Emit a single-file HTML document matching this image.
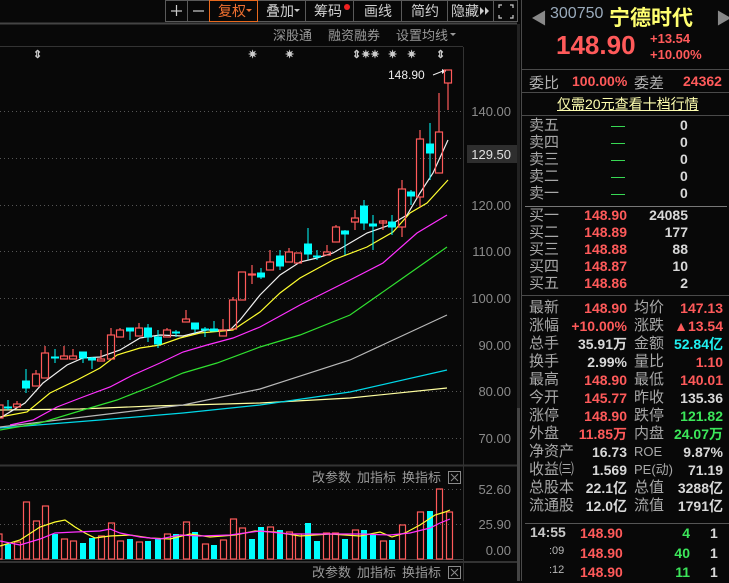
<!DOCTYPE html>
<html><head><meta charset="utf-8"><style>
*{margin:0;padding:0;box-sizing:border-box}
body{width:729px;height:581px;background:#080808;overflow:hidden;position:relative;font-family:"Liberation Sans","Noto Sans CJK SC",sans-serif}
.a{position:absolute;white-space:nowrap}
.g{color:#b8b8b8}
.r{color:#ff5a5a}
.gr{color:#3ce65a}
.w{color:#d8d8d8}
.num{font-weight:bold;font-size:14px}
.lb{font-size:15px;color:#b0b0b0}
.hl{position:absolute;left:521px;width:208px;height:1px;background:#4a4a4a}
</style></head><body>
<svg width="520" height="581" style="position:absolute;left:0;top:0" font-family="Liberation Sans,Noto Sans CJK SC,sans-serif">
<g stroke="#5a5a5a" fill="none">
<rect x="165.5" y="0.5" width="22" height="21"/><rect x="187.5" y="0.5" width="22" height="21"/>
<rect x="257.5" y="0.5" width="48" height="21"/><rect x="305.5" y="0.5" width="48" height="21"/>
<rect x="353.5" y="0.5" width="48" height="21"/><rect x="401.5" y="0.5" width="46" height="21"/>
<rect x="447.5" y="0.5" width="46" height="21"/><rect x="493.5" y="0.5" width="24" height="21"/>
</g>
<rect x="209.5" y="0.5" width="48" height="21" stroke="#e8691e" fill="none"/>
<line x1="0" y1="23.5" x2="517" y2="23.5" stroke="#444" stroke-width="2"/>
<g stroke="#ccc" stroke-width="1.2"><line x1="171" y1="11" x2="182" y2="11"/><line x1="176.5" y1="5" x2="176.5" y2="16"/><line x1="193" y1="11" x2="204" y2="11"/></g>
<g font-size="14" fill="#d0d0d0"><text x="218" y="16" fill="#f07030">复权</text><text x="266" y="16">叠加</text><text x="314" y="16">筹码</text><text x="364" y="16">画线</text><text x="411" y="16">简约</text><text x="451" y="16">隐藏</text></g>
<path d="M246 9l3 3 3-3z" fill="#f07030"/><path d="M294 9l3 3 3-3z" fill="#ccc"/><circle cx="347" cy="7" r="3" fill="#f02020"/>
<path d="M480 7l4 4-4 4zM485 7l4 4-4 4z" fill="#ccc"/>
<g stroke="#ccc" stroke-width="1.2" fill="none"><path d="M499 8v-3h3M510 5h3v3M499 15v3h3M513 15v3h-3"/></g>
<line x1="0" y1="46.5" x2="463" y2="46.5" stroke="#333"/>
<g font-size="13" fill="#9a9a9a"><text x="273" y="40">深股通</text><text x="328" y="40">融资融券</text><text x="396" y="40">设置均线</text></g>
<path d="M450 33l3 3 3-3z" fill="#9a9a9a"/>
<g font-size="11" fill="#ccc" font-weight="bold"><text x="33" y="58">⇕</text><text x="248" y="58">✷</text><text x="285" y="58">✷</text><text x="352" y="58">⇕✷✷</text><text x="388" y="58">✷</text><text x="407" y="58">✷</text><text x="436" y="58">⇕</text></g>
<g stroke="#555" stroke-dasharray="1,3"><line x1="0" y1="111.5" x2="463" y2="111.5"/><line x1="0" y1="158.5" x2="463" y2="158.5"/><line x1="0" y1="205.5" x2="463" y2="205.5"/><line x1="0" y1="251.5" x2="463" y2="251.5"/><line x1="0" y1="298.5" x2="463" y2="298.5"/><line x1="0" y1="345.5" x2="463" y2="345.5"/><line x1="0" y1="391.5" x2="463" y2="391.5"/><line x1="0" y1="438.5" x2="463" y2="438.5"/>
<line x1="0" y1="489.5" x2="463" y2="489.5"/><line x1="0" y1="524.5" x2="463" y2="524.5"/></g>
<line x1="463.5" y1="47" x2="463.5" y2="581" stroke="#333"/>
<g font-size="13" fill="#8a8a8a" text-anchor="end"><text x="511" y="116">140.00</text><text x="511" y="210">120.00</text><text x="511" y="256">110.00</text><text x="511" y="303">100.00</text><text x="511" y="350">90.00</text><text x="511" y="396">80.00</text><text x="511" y="443">70.00</text>
<text x="511" y="494">52.60</text><text x="511" y="529">25.90</text><text x="511" y="555">0.00</text></g>
<rect x="467" y="145" width="50" height="18" fill="#2e2e2e"/>
<text x="511" y="159" font-size="13" fill="#e0e0e0" text-anchor="end">129.50</text>
<text x="388" y="79" font-size="12" fill="#eee">148.90</text>
<path d="M433 75l10-4 3 0" stroke="#eee" fill="none"/><path d="M442 69l4 2-4 3z" fill="#eee"/>
<g fill="none" stroke-width="1.2">
<polyline stroke="#ffffa0" points="0,410 80,409 153,406 260,403 350,398 447,388"/>
<polyline stroke="#00d8e8" points="0,428 100,420 183,413 260,405 350,392 447,370"/>
<polyline stroke="#b8b8b8" points="0,427 100,415 183,405 260,389 350,360 447,315"/>
<polyline stroke="#30e030" points="0,430 40,423 83,410 117,400 150,387 183,373 217,363 260,347 300,335 350,315 400,280 447,247"/>
<polyline stroke="#ff30ff" points="10,425 33,420 57,407 83,397 110,387 133,375 160,363 183,352 207,345 233,338 260,327 300,305 350,280 383,263 417,233 447,215"/>
<polyline stroke="#ffff30" points="0,417 27,412 50,393 77,380 100,368 117,355 140,348 160,345 180,338 200,333 233,330 260,312 280,293 300,278 333,260 367,247 393,232 410,213 427,203 448,180"/>
<polyline stroke="#f0f0f0" points="0,418 25,403 43,383 67,365 83,358 100,357 120,350 140,338 160,335 183,336 207,330 230,330 240,320 260,295 280,275 300,262 317,258 333,253 350,243 367,233 390,225 407,215 420,193 433,173 448,140"/>
</g>
<g stroke="#ff5a5a" fill="none" stroke-width="1.2">
<path d="M17 401v3M36 370v4M45 346v7M64 346v10M73 349v7M101 350v9M111 328v7M120 328v2M139 323v5M167 328v2M186 310v9M223 319v11M233 297v3M252 265v19M270 250v12M289 248v4M327 245v7M336 225v2M355 210v8M355 222v8M383 220v10M402 180v9M402 227v10M420 130v9M420 197v10M439 93v39M448 83v27"/>
<rect x="-4" y="405" width="7" height="13"/><rect x="13.5" y="404" width="7" height="3"/><rect x="32.5" y="374" width="7" height="12"/><rect x="41.5" y="353" width="7" height="25"/><rect x="60.5" y="356" width="7" height="3"/><rect x="69.5" y="356" width="7" height="3"/><rect x="97.5" y="359" width="7" height="2"/><rect x="107.5" y="335" width="7" height="24"/><rect x="116.5" y="330" width="7" height="7"/><rect x="135.5" y="328" width="7" height="8"/><rect x="163.5" y="330" width="7" height="7"/><rect x="182.5" y="319" width="7" height="3"/><rect x="219.5" y="330" width="7" height="6"/><rect x="229.5" y="300" width="7" height="29"/><rect x="238.5" y="272" width="7" height="28"/><rect x="248.5" y="274" width="7" height="1"/><rect x="266.5" y="262" width="7" height="8"/><rect x="285.5" y="252" width="7" height="10"/><rect x="294.5" y="253" width="7" height="10"/><rect x="323.5" y="252" width="7" height="3"/><rect x="332.5" y="227" width="7" height="15"/><rect x="351.5" y="218" width="7" height="4"/><rect x="379.5" y="221" width="7" height="2"/><rect x="398.5" y="189" width="7" height="38"/><rect x="416.5" y="139" width="7" height="58"/><rect x="435.5" y="132" width="7" height="41"/><rect x="444.5" y="70" width="7" height="13"/>
</g>
<g fill="#00ffff" stroke="#00ffff" stroke-width="1">
<path d="M8 400v10M26 369v24M55 349v14M83 352v11M92 357v12M130 328v12M148 324v18M158 330v18M176 330v7M195 323v10M205 327v10M214 321v10M261 268v11M280 250v20M308 228v32M317 250v10M345 230v25M364 200v30M373 215v35M392 215v20M411 190v15M430 123v57"/>
<rect x="4.5" y="407" width="7" height="1"/><rect x="22.5" y="381" width="7" height="7"/><rect x="51.5" y="357" width="7" height="1"/><rect x="79.5" y="352" width="7" height="6"/><rect x="88.5" y="358" width="7" height="2"/><rect x="126.5" y="328" width="7" height="3"/><rect x="144.5" y="328" width="7" height="9"/><rect x="154.5" y="337" width="7" height="7"/><rect x="172.5" y="332" width="7" height="1"/><rect x="191.5" y="323" width="7" height="6"/><rect x="201.5" y="329" width="7" height="1"/><rect x="210.5" y="329" width="7" height="2"/><rect x="257.5" y="273" width="7" height="4"/><rect x="276.5" y="256" width="7" height="10"/><rect x="304.5" y="244" width="7" height="10"/><rect x="313.5" y="256" width="7" height="1"/><rect x="341.5" y="231" width="7" height="3"/><rect x="360.5" y="206" width="7" height="17"/><rect x="369.5" y="224" width="7" height="2"/><rect x="388.5" y="222" width="7" height="5"/><rect x="407.5" y="192" width="7" height="4"/><rect x="426.5" y="144" width="7" height="9"/>
</g>
<line x1="0" y1="465.5" x2="517" y2="465.5" stroke="#333" stroke-width="2"/>
<g font-size="13" fill="#9a9a9a"><text x="312" y="482">改参数</text><text x="357" y="482">加指标</text><text x="402" y="482">换指标</text><text x="312" y="577">改参数</text><text x="357" y="577">加指标</text><text x="402" y="577">换指标</text></g>
<g stroke="#8a8a8a" fill="none"><rect x="448.5" y="471.5" width="12" height="12"/><path d="M451 474l7 7M458 474l-7 7"/><rect x="448.5" y="566.5" width="12" height="12"/><path d="M451 569l7 7M458 569l-7 7"/></g>
<line x1="0" y1="559.5" x2="463" y2="559.5" stroke="#444"/>
<line x1="0" y1="562" x2="517" y2="562" stroke="#333" stroke-width="2"/>
<g fill="#00ffff">
<rect x="5" y="544" width="6" height="15"/><rect x="52" y="534" width="6" height="25"/><rect x="80" y="543" width="6" height="16"/><rect x="89" y="538" width="6" height="21"/><rect x="127" y="539" width="6" height="20"/><rect x="145" y="541" width="6" height="18"/><rect x="155" y="539" width="6" height="20"/><rect x="173" y="534" width="6" height="25"/><rect x="192" y="532" width="6" height="27"/><rect x="211" y="545" width="6" height="14"/><rect x="249" y="539" width="6" height="20"/><rect x="258" y="527" width="6" height="32"/><rect x="277" y="530" width="6" height="29"/><rect x="305" y="523" width="6" height="36"/><rect x="314" y="541" width="6" height="18"/><rect x="342" y="539" width="6" height="20"/><rect x="361" y="530" width="6" height="29"/><rect x="370" y="535" width="6" height="24"/><rect x="389" y="540" width="6" height="19"/><rect x="427" y="511" width="6" height="48"/>
</g>
<g stroke="#ff5a5a" fill="none" stroke-width="1.2">
<rect x="-3" y="534" width="5" height="25"/><rect x="14.5" y="542" width="6" height="17"/><rect x="23.5" y="502" width="6" height="57"/><rect x="33.5" y="521" width="6" height="38"/><rect x="42.5" y="506" width="6" height="53"/><rect x="61.5" y="539" width="6" height="20"/><rect x="70.5" y="541" width="6" height="18"/><rect x="98.5" y="536" width="6" height="23"/><rect x="108.5" y="523" width="6" height="36"/><rect x="117.5" y="541" width="6" height="18"/><rect x="136.5" y="542" width="6" height="17"/><rect x="164.5" y="534" width="6" height="25"/><rect x="183.5" y="522" width="6" height="37"/><rect x="202.5" y="544" width="6" height="15"/><rect x="220.5" y="540" width="6" height="19"/><rect x="230.5" y="519" width="6" height="40"/><rect x="239.5" y="528" width="6" height="31"/><rect x="267.5" y="527" width="6" height="32"/><rect x="286.5" y="532" width="6" height="27"/><rect x="295.5" y="534" width="6" height="25"/><rect x="323.5" y="533" width="6" height="26"/><rect x="332.5" y="533" width="6" height="26"/><rect x="352.5" y="530" width="6" height="29"/><rect x="380.5" y="541" width="6" height="18"/><rect x="399.5" y="525" width="6" height="34"/><rect x="417.5" y="512" width="6" height="47"/><rect x="436.5" y="489" width="6" height="70"/><rect x="446.5" y="512" width="6" height="47"/>
</g>
<g fill="none" stroke-width="1.2">
<polyline stroke="#ffff30" points="0,546 20,540 40,527 55,522 65,520 75,527 85,533 95,538 110,536 130,535 150,538 170,539 190,534 210,537 235,535 255,531 275,532 300,536 330,534 360,536 380,532 392,537 405,533 420,525 435,515 445,512 450,510"/>
<polyline stroke="#ff30ff" points="0,541 20,545 40,539 55,533 75,532 100,531 110,529 120,533 140,537 160,539 180,535 200,536 230,535 260,531 290,534 330,534 360,534 390,535 410,533 430,528 440,523 450,519"/>
</g>
<rect x="517" y="24" width="4" height="557" fill="#222"/>
<rect x="517" y="408" width="4" height="173" fill="#444"/>
</svg>

<div class="a" style="left:521px;top:0;width:1px;height:581px;background:#4a4a4a"></div>
<div class="a" style="left:531px;top:5px;font-size:16px;color:#888">◀</div>
<div class="a" style="left:550px;top:5px;font-size:16px;color:#9ab">300750</div>
<div class="a" style="left:609px;top:2px;font-size:21px;font-weight:bold;color:#ffff70">宁德时代</div>
<div class="a" style="left:716px;top:5px;font-size:16px;color:#888">▶</div>
<div class="a r" style="left:556px;top:30px;font-size:26px;font-weight:bold">148.90</div>
<div class="a r num" style="left:650px;top:31px;font-size:13px">+13.54</div>
<div class="a r num" style="left:650px;top:47px;font-size:13px">+10.00%</div>
<div class="hl" style="top:69px"></div>
<div class="a lb" style="left:529px;top:72px">委比</div>
<div class="a r num" style="left:572px;top:73px">100.00%</div>
<div class="a lb" style="left:634px;top:72px">委差</div>
<div class="a r num" style="left:683px;top:73px">24362</div>
<div class="hl" style="top:92px"></div>
<div class="a" style="left:557px;top:94px;font-size:14px;color:#ffffb0;text-decoration:underline">仅需20元查看十档行情</div>
<div class="hl" style="top:115px"></div>

<div class="a" style="left:529px;top:117px;font-size:15px;line-height:17px;color:#a8a8a8">卖五<br>卖四<br>卖三<br>卖二<br>卖一</div>
<div class="a" style="left:611px;top:117px;line-height:17px;font-size:14px;color:#3ce65a">—<br>—<br>—<br>—<br>—</div>
<div class="a w num" style="left:680px;top:117px;line-height:17px">0<br>0<br>0<br>0<br>0</div>
<div class="hl" style="top:206px;left:525px;width:202px;background:#777"></div>
<div class="a" style="left:529px;top:207px;font-size:15px;line-height:17px;color:#a8a8a8">买一<br>买二<br>买三<br>买四<br>买五</div>
<div class="a r num" style="left:573px;top:207px;line-height:17px;width:54px;text-align:right">148.90<br>148.89<br>148.88<br>148.87<br>148.86</div>
<div class="a w num" style="left:630px;top:207px;line-height:17px;width:58px;text-align:right">24085<br>177<br>88<br>10<br>2</div>
<div class="hl" style="top:295px"></div>

<div class="a" style="left:529px;top:299px;font-size:15px;line-height:18px;color:#a8a8a8">最新<br>涨幅<br>总手<br>换手<br>最高<br>今开<br>涨停<br>外盘<br>净资产<br>收益㈢<br>总股本<br>流通股</div>
<div class="a num" style="left:560px;top:299px;line-height:18px;width:67px;text-align:right"><span class="r">148.90</span><br><span class="r">+10.00%</span><br><span class="w">35.91万</span><br><span class="w">2.99%</span><br><span class="r">148.90</span><br><span class="r">145.77</span><br><span class="r">148.90</span><br><span class="r">11.85万</span><br><span class="w">16.73</span><br><span class="w">1.569</span><br><span class="w">22.1亿</span><br><span class="w">12.0亿</span></div>
<div class="a" style="left:634px;top:299px;font-size:15px;line-height:18px;color:#a8a8a8">均价<br>涨跌<br>金额<br>量比<br>最低<br>昨收<br>跌停<br>内盘<br><span style="font-size:13px">ROE</span><br><span style="font-size:13px">PE(动)</span><br>总值<br>流值</div>
<div class="a num" style="left:660px;top:299px;line-height:18px;width:63px;text-align:right"><span class="r">147.13</span><br><span class="r">▲13.54</span><br><span style="color:#20f0f0">52.84亿</span><br><span class="r">1.10</span><br><span class="r">140.01</span><br><span class="w">135.36</span><br><span class="gr">121.82</span><br><span class="gr">24.07万</span><br><span class="w">9.87%</span><br><span class="w">71.19</span><br><span class="w">3288亿</span><br><span class="w">1791亿</span></div>
<div class="hl" style="top:523px;left:525px;width:204px;background:#555"></div>
<div class="a w num" style="left:530px;top:524px;color:#c8c8c8">14:55</div>
<div class="a g" style="left:549px;top:545px;font-size:11px">:09</div>
<div class="a g" style="left:549px;top:564px;font-size:11px">:12</div>
<div class="a r num" style="left:580px;top:524px;line-height:19.5px">148.90<br>148.90<br>148.90</div>
<div class="a gr num" style="left:660px;top:524px;line-height:19.5px;width:30px;text-align:right">4<br>40<br>11</div>
<div class="a w num" style="left:710px;top:524px;line-height:19.5px">1<br>1<br>1</div>
</body></html>
